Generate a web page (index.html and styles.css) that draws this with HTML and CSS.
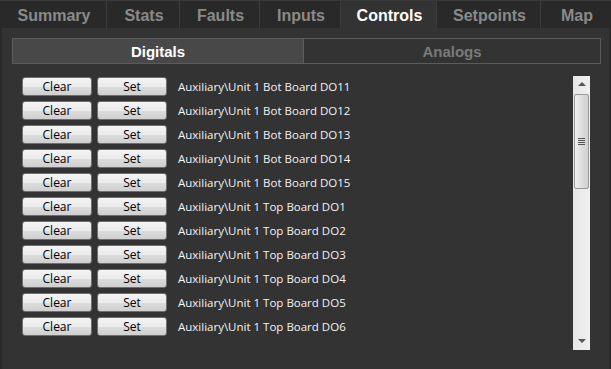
FILE: index.html
```html
<!DOCTYPE html>
<html lang="en">
<head>
    <meta charset="UTF-8">
    <title>Controls</title>
    <link rel="stylesheet" href="styles.css">
</head>
<body>
    <div class="tabs">
        <div class="tab" style="width:107px">Summary</div>
        <div class="tab" style="width:73px">Stats</div>
        <div class="tab" style="width:80px">Faults</div>
        <div class="tab" style="width:81px">Inputs</div>
        <div class="tab active" style="width:96px">Controls</div>
        <div class="tab" style="width:104px">Setpoints</div>
        <div class="tab last">Map</div>
    </div>

    <div class="panel">
        <div class="subtabs">
            <div class="subtab active">Digitals</div>
            <div class="subtab">Analogs</div>
        </div>

        <div class="list-wrap">
            <div class="rows" id="rows"></div>
            <div class="scrollbar">
                <div class="arrow up"></div>
                <div class="thumb"><span class="grip"></span></div>
                <div class="track"></div>
                <div class="arrow down"></div>
            </div>
        </div>
    </div>

    <script>
        // points shown in the digitals list
        const points = [
            'Auxiliary\\Unit 1 Bot Board DO11',
            'Auxiliary\\Unit 1 Bot Board DO12',
            'Auxiliary\\Unit 1 Bot Board DO13',
            'Auxiliary\\Unit 1 Bot Board DO14',
            'Auxiliary\\Unit 1 Bot Board DO15',
            'Auxiliary\\Unit 1 Top Board DO1',
            'Auxiliary\\Unit 1 Top Board DO2',
            'Auxiliary\\Unit 1 Top Board DO3',
            'Auxiliary\\Unit 1 Top Board DO4',
            'Auxiliary\\Unit 1 Top Board DO5',
            'Auxiliary\\Unit 1 Top Board DO6'
        ];

        const rows = document.getElementById('rows');
        points.forEach(function (name) {
            const row = document.createElement('div');
            row.className = 'row';
            row.innerHTML = '<button class="btn">Clear</button><button class="btn">Set</button><span class="name"></span>';
            row.querySelector('.name').textContent = name;
            rows.appendChild(row);
        });
    </script>
</body>
</html>
```

FILE: styles.css
```css
body {
    margin: 0;
    background-color: #333333;
    font-family: "Liberation Sans", Arial, sans-serif;
    width: 611px;
    height: 369px;
    overflow: hidden;
}
.tabs {
    display: flex;
    height: 28px;
    background-color: #292929;
    border-top: 1px solid #3a3a3a;
    box-sizing: border-box;
}
.tab {
    box-sizing: border-box;
    border-right: 1px solid #3c3c3c;
    color: #8a8a8a;
    font-weight: bold;
    font-size: 16px;
    text-align: center;
    line-height: 29px;
    padding-left: 2px;
}
.tab.active {
    background-color: #333333;
    color: #ffffff;
}
.tab.last {
    flex: 1;
    border-right: none;
}
.panel {
    height: 341px;
    border-left: 2px solid #2a2a2a;
    border-right: 2px solid #2a2a2a;
    box-sizing: border-box;
    padding: 10px 8px 0 10px;
}
.subtabs {
    display: flex;
    height: 26px;
}
.subtab {
    flex: 1;
    border: 1px solid #5c5c5c;
    color: #7a7a7a;
    font-weight: bold;
    font-size: 15px;
    text-align: center;
    line-height: 25px;
}
.subtab.active {
    flex: none;
    width: 291px;
    box-sizing: border-box;
    background-color: #484848;
    color: #ffffff;
    border-right: none;
}
.list-wrap {
    display: flex;
    margin-top: 12px;
    height: 274px;
}
.rows {
    flex: 1;
    padding-left: 10px;
}
.row {
    display: flex;
    align-items: flex-start;
    height: 24px;
    padding-top: 1px;
    box-sizing: border-box;
}
.btn {
    width: 70px;
    height: 19px;
    margin-right: 5px;
    padding: 0;
    border: 1px solid #6f6f6f;
    border-radius: 3px;
    background: linear-gradient(#f4f4f4, #ebebeb 50%, #dcdcdc 51%, #d0d0d0);
    font-family: "Open Sans", "Liberation Sans", sans-serif;
    font-size: 12px;
    color: #000000;
    line-height: 16px;
}
.name {
    margin-left: 6px;
    font-family: "Open Sans", "Liberation Sans", sans-serif;
    font-size: 11.5px;
    line-height: 19px;
    color: #f2f2f2;
}
.scrollbar {
    width: 17px;
    margin-right: 11px;
    display: flex;
    flex-direction: column;
    background: linear-gradient(to right, #e6e6e6, #f0f0f0);
}
.arrow {
    height: 17px;
    position: relative;
}
.arrow::after {
    content: "";
    position: absolute;
    left: 5px;
    top: 6px;
    border-left: 4px solid transparent;
    border-right: 4px solid transparent;
}
.arrow.up::after {
    border-bottom: 4px solid #555555;
}
.arrow.down::after {
    border-top: 4px solid #555555;
}
.thumb {
    height: 95px;
    box-sizing: border-box;
    margin: 1px;
    border: 1px solid #9a9a9a;
    border-radius: 2px;
    background: linear-gradient(to right, #f0f0f0, #dedede 50%, #cfcfcf);
    display: flex;
    align-items: center;
    justify-content: center;
}
.grip {
    width: 7px;
    height: 7px;
    background: repeating-linear-gradient(#555555 0 1px, transparent 1px 2px);
}
.track {
    flex: 1;
}
```
